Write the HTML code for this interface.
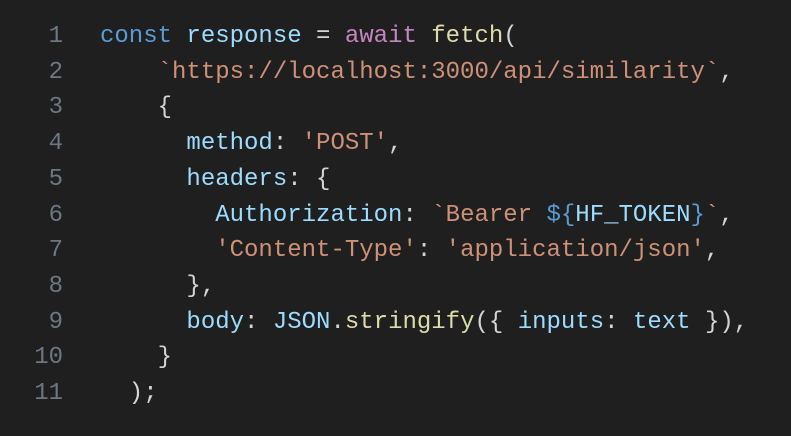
<!DOCTYPE html>
<html><head><style>
html,body{margin:0;padding:0;background:#1f1f1f;width:791px;height:436px;overflow:hidden}
.c{position:absolute;top:19px;left:0;font-family:"Liberation Mono",monospace;font-size:24px;line-height:35.7px;color:#d4d4d4;white-space:pre}
.n{position:absolute;top:19px;left:0;width:63px;text-align:right;font-family:"Liberation Mono",monospace;font-size:24px;line-height:35.7px;color:#6e7681;white-space:pre}
.c{left:100px}
.k{color:#569cd6}.v{color:#9cdcfe}.a{color:#c586c0}.f{color:#dcdcaa}.s{color:#ce9178}
</style></head><body>
<div class="n">1
2
3
4
5
6
7
8
9
10
11</div>
<div class="c"><span class="k">const</span> <span class="v">response</span> = <span class="a">await</span> <span class="f">fetch</span>(
    <span class="s">`https://localhost:3000/api/similarity`</span>,
    {
      <span class="v">method</span>: <span class="s">'POST'</span>,
      <span class="v">headers</span>: {
        <span class="v">Authorization</span>: <span class="s">`Bearer </span><span class="k">${</span><span class="v">HF_TOKEN</span><span class="k">}</span><span class="s">`</span>,
        <span class="s">'Content-Type'</span>: <span class="s">'application/json'</span>,
      },
      <span class="v">body</span>: <span class="v">JSON</span>.<span class="f">stringify</span>({ <span class="v">inputs</span>: <span class="v">text</span> }),
    }
  );</div>
</body></html>
